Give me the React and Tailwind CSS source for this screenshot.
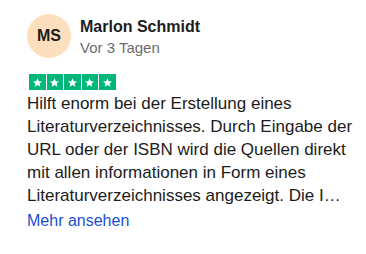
import React from "react";

function Star() {
  return (
    <div className="w-[16.5px] h-4 bg-[#00b67a] flex items-center justify-center">
      <svg viewBox="0 0 24 24" className="w-[11px] h-[11px]" fill="white">
        <path d="M12 2.5l2.9 6.6 7.1.6-5.4 4.7 1.6 7-6.2-3.7-6.2 3.7 1.6-7L2 9.7l7.1-.6z" />
      </svg>
    </div>
  );
}

export default function App() {
  return (
    <div className="w-[366px] h-[254px] bg-white pl-[27px] pr-2 pt-[14px]" style={{ fontFamily: '"Liberation Sans", Arial, sans-serif' }}>
      <div className="flex items-start gap-[9px]">
        <div className="w-[44px] h-[44px] shrink-0 rounded-full bg-[#fddfbd] flex items-center justify-center text-[16px] font-bold text-[#1c1c1c]">
          MS
        </div>
        <div className="flex flex-col pt-[3px]">
          <div className="text-[16px] font-bold text-[#1c1c1c] leading-[20px]">Marlon Schmidt</div>
          <div className="text-[15px] text-[#6b6b6b] leading-[20px] mt-px">Vor 3 Tagen</div>
        </div>
      </div>
      <div className="flex gap-px mt-[16px] pl-[2px]">
        <Star /><Star /><Star /><Star /><Star />
      </div>
      <p className="mt-[1.5px] text-[17px] leading-[23px] text-[#1c1c1c]">
        Hilft enorm bei der Erstellung eines Literaturverzeichnisses. Durch Eingabe der URL oder der ISBN wird die Quellen direkt mit allen informationen in Form eines Literaturverzeichnisses angezeigt. Die I…
      </p>
      <div className="mt-[2px] text-[16px] leading-6 text-[#1a4fd6]">Mehr ansehen</div>
    </div>
  );
}
